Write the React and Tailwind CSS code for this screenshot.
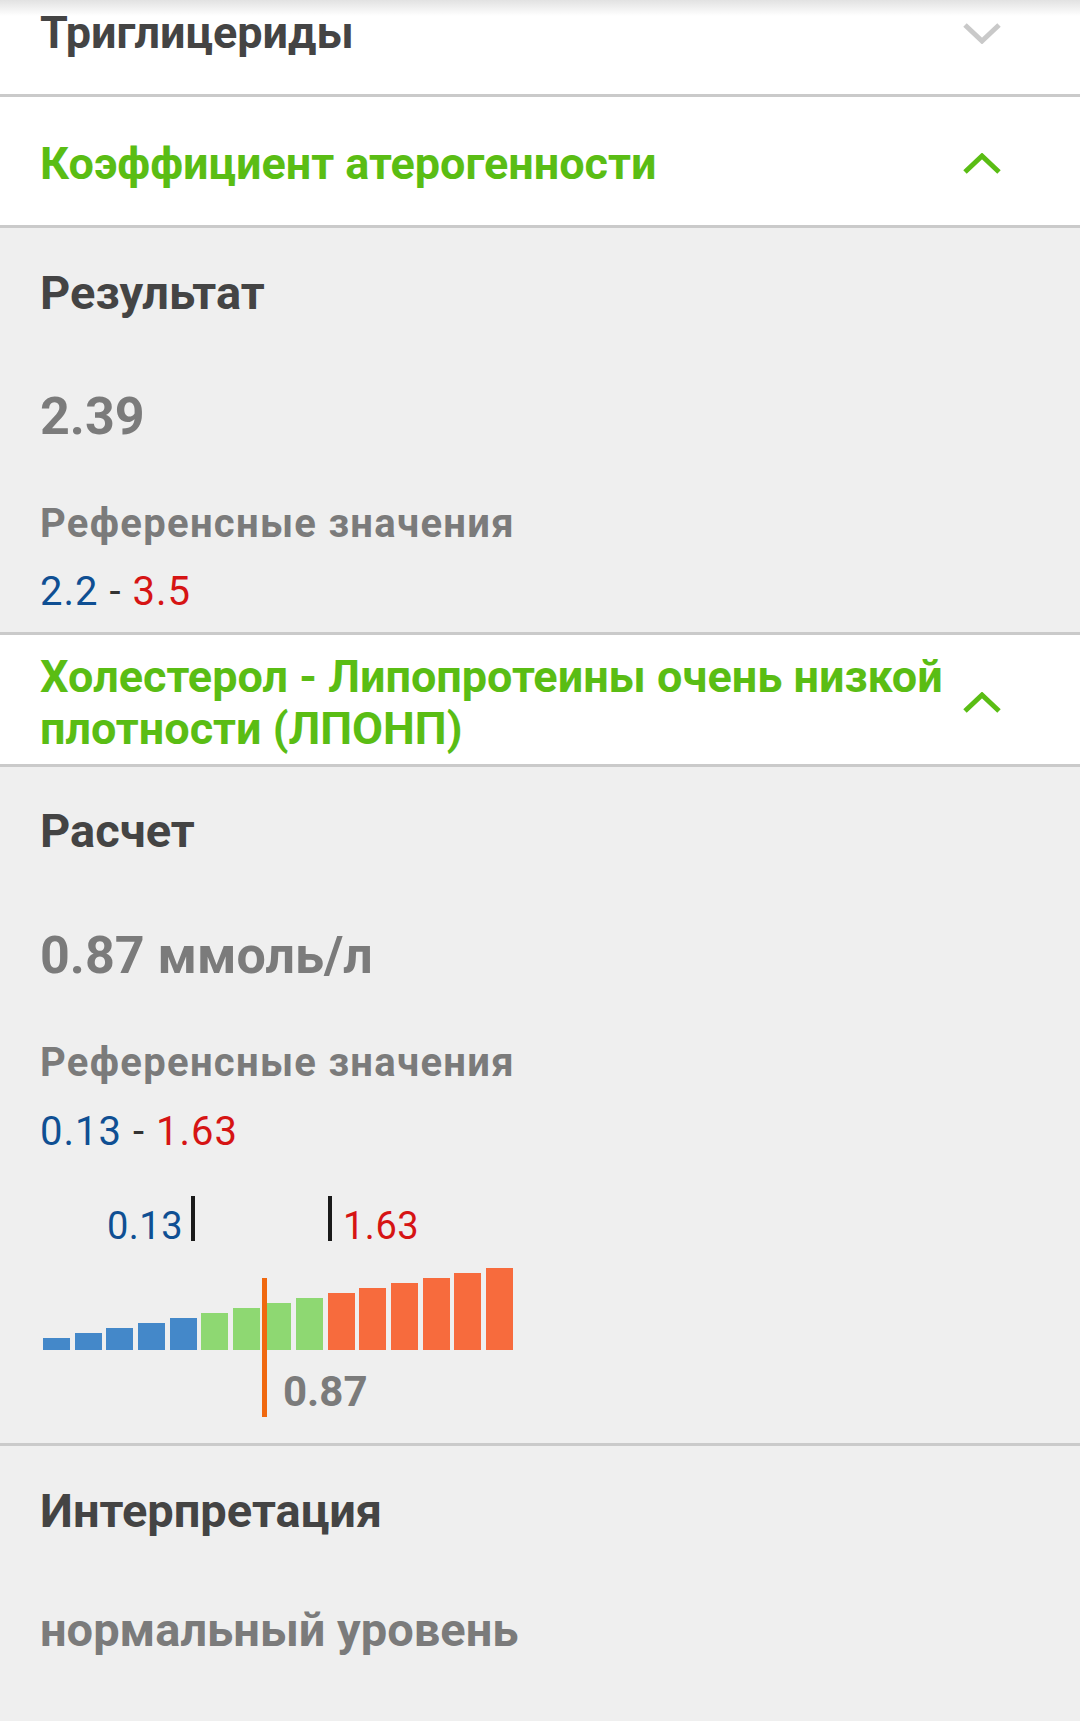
import React from "react";

function Chevron({ up, className }) {
  return (
    <svg width="40" height="22" viewBox="0 0 40 22" className={className} fill="none">
      <polyline
        points={up ? "3,19 20,3 37,19" : "3,3 20,19 37,3"}
        stroke="currentColor"
        strokeWidth="5"
        strokeLinejoin="miter"
      />
    </svg>
  );
}

function Header({ children, open, className = "" }) {
  return (
    <div className={`flex items-center bg-white pl-[40px] ${className}`}>
      <div
        className={`flex-1 text-[45px] font-bold leading-[52px] ${
          open ? "text-[#5abd14]" : "text-[#444444]"
        }`}
      >
        {children}
      </div>
      <div className="ml-[10px] mr-[78px] flex w-[40px] justify-center">
        <Chevron up={open} className={open ? "text-[#5abd14]" : "text-[#c9c9c9]"} />
      </div>
    </div>
  );
}

function Divider() {
  return <div className="h-[3px] bg-[#cacaca]" />;
}

const bars = [
  { h: 12, c: "bg-[#4488c9]" },
  { h: 17, c: "bg-[#4488c9]" },
  { h: 22, c: "bg-[#4488c9]" },
  { h: 27, c: "bg-[#4488c9]" },
  { h: 32, c: "bg-[#4488c9]" },
  { h: 37, c: "bg-[#8ed872]" },
  { h: 42, c: "bg-[#8ed872]" },
  { h: 47, c: "bg-[#8ed872]" },
  { h: 52, c: "bg-[#8ed872]" },
  { h: 57, c: "bg-[#f76b3d]" },
  { h: 62, c: "bg-[#f76b3d]" },
  { h: 67, c: "bg-[#f76b3d]" },
  { h: 72, c: "bg-[#f76b3d]" },
  { h: 77, c: "bg-[#f76b3d]" },
  { h: 82, c: "bg-[#f76b3d]" },
];

function RangeChart() {
  return (
    <div className="relative h-[292px]">
      <span className="absolute right-[897px] top-[56px] text-[38px] leading-[38px] tracking-[0.5px] text-[#0f4f93]">
        0.13
      </span>
      <div className="absolute left-[191px] top-[45px] h-[45px] w-[4px] bg-[#1a1a1a]" />
      <div className="absolute left-[328px] top-[45px] h-[45px] w-[4px] bg-[#1a1a1a]" />
      <span className="absolute left-[343px] top-[56px] text-[38px] leading-[38px] tracking-[0.5px] text-[#d61414]">
        1.63
      </span>
      <div className="absolute left-[43px] top-[117px] flex h-[82px] items-end gap-[4.65px]">
        {bars.map((b, i) => (
          <div key={i} className={`w-[27px] ${b.c}`} style={{ height: b.h }} />
        ))}
      </div>
      <div className="absolute left-[262px] top-[127px] h-[139px] w-[5px] bg-[#f0680f]" />
      <span className="absolute left-[283px] top-[220px] text-[42px] font-bold leading-[41px] text-[#7b7b7b]">
        0.87
      </span>
    </div>
  );
}

export default function App() {
  return (
    <div className="relative h-[1721px] w-[1080px] overflow-hidden bg-[#efefef] font-[Roboto,sans-serif]">
      <Header className="mt-[-34px] h-[128px] pt-[6px]">Триглицериды</Header>
      <Divider />
      <Header open className="h-[128px] pt-[6px]">
        Коэффициент атерогенности
      </Header>
      <Divider />

      <section className="bg-[#efefef] px-[40px] pb-[21px] pt-[43px]">
        <div className="text-[47px] font-bold leading-[44px] text-[#444444]">Результат</div>
        <div className="mt-[77px] text-[52px] font-bold leading-[50px] text-[#7b7b7b]">2.39</div>
        <div className="mt-[64px] text-[40px] font-bold leading-[36px] tracking-[1.3px] text-[#7b7b7b]">
          Референсные значения
        </div>
        <div className="mt-[30px] text-[40px] leading-[39px] tracking-[1px] text-[#333333]">
          <span className="text-[#0f4f93]">2.2</span> - <span className="text-[#d61414]">3.5</span>
        </div>
      </section>
      <Divider />

      <Header open className="pb-[9px] pt-[16px]">
        Холестерол - Липопротеины очень низкой плотности (ЛПОНП)
      </Header>
      <Divider />

      <section className="bg-[#efefef]">
        <div className="px-[40px] pt-[42px]">
          <div className="text-[47px] font-bold leading-[44px] text-[#444444]">Расчет</div>
          <div className="mt-[78px] text-[52px] font-bold leading-[50px] text-[#7b7b7b]">
            0.87 ммоль/л
          </div>
          <div className="mt-[64px] text-[40px] font-bold leading-[36px] tracking-[1.3px] text-[#7b7b7b]">
            Референсные значения
          </div>
          <div className="mt-[31px] text-[40px] leading-[39px] tracking-[1px] text-[#333333]">
            <span className="text-[#0f4f93]">0.13</span> -{" "}
            <span className="text-[#d61414]">1.63</span>
          </div>
        </div>
        <RangeChart />
      </section>
      <Divider />

      <section className="bg-[#efefef] px-[40px] pt-[43px]">
        <div className="text-[47px] font-bold leading-[44px] text-[#444444]">Интерпретация</div>
        <div className="mt-[72px] text-[47px] font-bold leading-[50px] text-[#7b7b7b]">
          нормальный уровень
        </div>
      </section>

      <div className="pointer-events-none absolute inset-x-0 top-0 h-[16px] bg-gradient-to-b from-[#e2e2e2] to-white/0" />
    </div>
  );
}
